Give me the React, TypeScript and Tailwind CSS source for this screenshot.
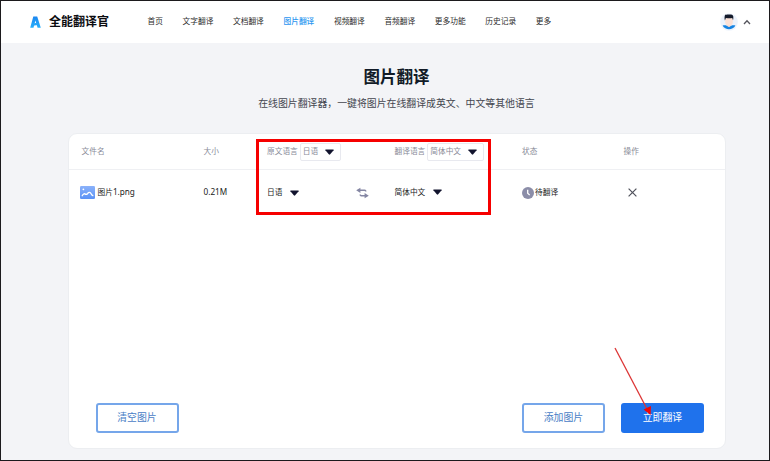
import React from 'react';

const navItems = ['首页', '文字翻译', '文档翻译', '图片翻译', '视频翻译', '音频翻译', '更多功能', '历史记录', '更多'];

const columns = 'grid grid-cols-[122px_63.5px_127.5px_127.5px_101.5px_1fr] items-center pl-[12.5px]';

const Logo: React.FC = () => (
  <svg className="w-[11px] h-[13px]" viewBox="0 0 11 13">
    <defs>
      <linearGradient id="logo" x1="0" y1="0" x2="0" y2="1">
        <stop offset="0" stopColor="#1b86f0" />
        <stop offset="1" stopColor="#27b0fb" />
      </linearGradient>
    </defs>
    <path d="M3.3 .6h3.900l3.600 11.200H7.600L5.400 4.600 3.500 11.800H.2z" fill="url(#logo)" />
    <path d="M2.600 7.600l4.600-.8.8 2.200-5.600.8z" fill="#25a4f8" />
  </svg>
);

const Avatar: React.FC = () => (
  <svg className="w-[18px] h-[18px]" viewBox="0 0 18 18">
    <circle cx="9" cy="9" r="8.800" fill="#edf3fc" />
    <path d="M2.600 12.600c1.800-.5 3-.3 4.200.1h4.400c1.500-.4 2.600-.6 4.200-.1-1.300 2.700-3.900 3.700-6.400 3.700s-5.100-1-6.400-3.700z" fill="#1583e2" />
    <path d="M7.200 10.500h3.600v2.300c-.9 1.700-2.700 1.700-3.600 0z" fill="#f8d5c6" />
    <rect x="5.200" y="3.500" width="7.600" height="9" rx="3.600" fill="#fbe1d6" />
    <path d="M4.900 7.500C4.300 5 4.400 2.700 5.500 1.500c.8.400 1.300.1 2.500.1 2.200-.2 5-.2 5.300 1.800.2 1.300 0 2.700-.3 3.800l-.8-2.200c-2 .4-4.300.3-6.300-.1z" fill="#141b2b" />
  </svg>
);

const Caret: React.FC = () => (
  <svg className="w-[9px] h-[6px] shrink-0" viewBox="0 0 9 6">
    <path d="M.7.500h7.600q.6.100.3.700L5.200 5.300q-.7.700-1.400 0L.4 1.200Q.1.600.7.500z" fill="#12142e" />
  </svg>
);

const FileIcon: React.FC = () => (
  <svg className="w-[15px] h-[13px] shrink-0" viewBox="0 0 15 13">
    <defs>
      <linearGradient id="file" x1="0" y1="0" x2="0" y2="1">
        <stop offset="0" stopColor="#8bb2fa" />
        <stop offset="1" stopColor="#5b92f6" />
      </linearGradient>
    </defs>
    <rect width="15" height="13" rx="1.200" fill="url(#file)" />
    <circle cx="3.400" cy="3.300" r=".9" fill="#fff" />
    <path d="M2.200 9.800c1-1.800 2-2.500 3.100-1.700 1 .7 1.600.3 2.300-.6 1.300-1.800 2.700-1.500 3.500.2.500 1.100.9 1.600 1.700 1.800" fill="none" stroke="#fff" strokeWidth="1.300" strokeLinecap="round" />
  </svg>
);

const SwapIcon: React.FC = () => (
  <svg className="w-[13px] h-[12px]" viewBox="0 0 13 12">
    <path d="M3 3.300h5.700q1.100 0 1.100 1.200M10 8.700H5.300q-1.100 0-1.100-1.200" fill="none" stroke="#8486a3" strokeWidth="1.500" />
    <path d="M4.400.7v5.200L.2 3.300zM8.600 6.100v5.200l4.200-2.600z" fill="#8486a3" />
  </svg>
);

const ClockIcon: React.FC = () => (
  <svg className="w-[12px] h-[12px] shrink-0" viewBox="0 0 12 12">
    <circle cx="6" cy="6" r="6" fill="#8b8da8" />
    <path d="M5.700 2.700v3.500l2 1.900" fill="none" stroke="#fff" strokeWidth="1.300" />
  </svg>
);

const App: React.FC = () => {
  return (
    <div className="relative flex flex-col w-[770px] h-[461px] overflow-hidden border border-[#1c1a1d] bg-[#f3f4f7] text-[7.7px] leading-none whitespace-nowrap text-[#222] font-['Noto_Sans','Noto_Sans_CJK_SC',sans-serif]">
      <header className="flex items-center shrink-0 h-[42px] pl-[29px] pr-[18px] bg-white">
        <Logo />
        <span className="ml-[8px] text-[12px] font-bold text-[#0c0c10]">全能翻译官</span>
        <nav className="flex ml-[38.5px] gap-[19.7px]">
          {navItems.map((item) => (
            <a key={item} href="#" className={item === '图片翻译' ? 'font-medium text-[#2b96f0]' : 'text-[#2b2b2b]'}>
              {item}
            </a>
          ))}
        </nav>
        <div className="flex items-center ml-auto gap-[5px]">
          <Avatar />
          <svg className="w-[8px] h-[6px]" viewBox="0 0 8 6">
            <path d="M1 5l3-3.300L7 5" fill="none" stroke="#55555c" strokeWidth="1.300" />
          </svg>
        </div>
      </header>

      <div className="flex flex-col items-center shrink-0 h-[90px] pt-[26px] pl-[23px]">
        <h1 className="text-[16.5px] font-bold text-[#111b27]">图片翻译</h1>
        <p className="mt-[13px] text-[9.9px] text-[#44464f]">在线图片翻译器，一键将图片在线翻译成英文、中文等其他语言</p>
      </div>

      <main className="flex flex-col w-[658px] h-[316px] ml-[67px] rounded-[9px] border border-[#eceef1] bg-white">
        <div className={`${columns} h-[36px] pt-[1px] border-b border-[#eff0f3] text-[#898b98]`}>
          <span>文件名</span>
          <span>大小</span>
          <div className="flex items-center gap-[2px]">
            原文语言
            <span className="flex items-center justify-between w-[41px] h-[18px] pl-[2px] pr-[6px] rounded-[2px] border border-[#e8e9ef]">
              日语
              <Caret />
            </span>
          </div>
          <div className="flex items-center gap-[2px]">
            翻译语言
            <span className="flex items-center justify-between w-[57px] h-[18px] pl-[2px] pr-[6px] rounded-[2px] border border-[#e8e9ef]">
              简体中文
              <Caret />
            </span>
          </div>
          <span>状态</span>
          <span>操作</span>
        </div>

        <div className={`${columns} h-[45px]`}>
          <div className="flex items-center gap-[3px] -ml-[2px]">
            <FileIcon />
            <span>
              图片<span className="text-[8.2px]">1.png</span>
            </span>
          </div>
          <span className="text-[8.2px]">0.21M</span>
          <div className="flex items-center gap-[7.5px]">
            日语
            <Caret />
            <span className="ml-auto mr-[26px]">
              <SwapIcon />
            </span>
          </div>
          <div className="flex items-center gap-[7.5px]">
            简体中文
            <Caret />
          </div>
          <div className="flex items-center gap-[1px]">
            <ClockIcon />
            待翻译
          </div>
          <svg className="w-[9px] h-[9px] ml-[4.5px]" viewBox="0 0 9 9">
            <path d="M.6.6l7.800 7.800M8.400.6L.6 8.400" stroke="#50525c" strokeWidth="1.200" />
          </svg>
        </div>

        <div className="flex mt-auto mb-[15px] pl-[26.5px] pr-[21px] text-[9.9px]">
          <button className="w-[83px] h-[30px] rounded-[3px] border-2 border-[#75a6ea] text-[#4a80c6]">清空图片</button>
          <button className="w-[83px] h-[30px] ml-auto rounded-[3px] border-2 border-[#75a6ea] text-[#4a80c6]">添加图片</button>
          <button className="w-[83px] h-[30px] ml-[16px] rounded-[3px] bg-[#1f72ec] text-white">立即翻译</button>
        </div>
      </main>

      {/* callouts over the language selectors and the submit button */}
      <div className="absolute left-[255px] top-[138px] w-[235px] h-[76px] border-[3px] border-[#f60000]" />
      <svg className="absolute left-[612px] top-[344px] w-[42px] h-[72px]" viewBox="0 0 42 72">
        <path d="M2 3l32 61" stroke="#dc3535" strokeWidth="1.300" />
        <path d="M30.600 64.500l7.400-3.500-.4 9z" fill="#f00808" />
      </svg>
    </div>
  );
};

export default App;
